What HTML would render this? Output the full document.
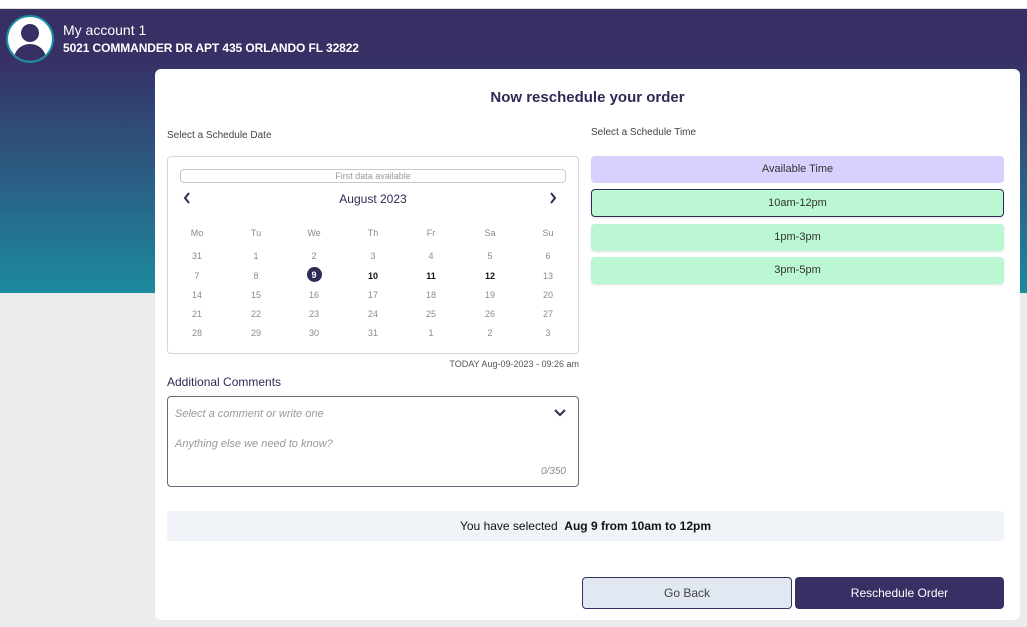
<!DOCTYPE html>
<html><head><style>
*{box-sizing:border-box;margin:0;padding:0}
body{width:1027px;height:627px;position:relative;overflow:hidden;background:#ececec;font-family:"Liberation Sans",sans-serif;}
.a{position:absolute}
.hdr{left:0;top:9px;width:1027px;height:284px;background:linear-gradient(#363065 0px,#363065 50px,#2f4f7a 130px,#1c8a9f 284px)}
.card{left:155px;top:69px;width:865px;height:551px;background:#fff;border-radius:6px}
.cal div{position:absolute;width:30px;text-align:center;font-size:9px;color:#8a8a8a}
.slot{position:absolute;left:591px;width:413px;height:27px;border-radius:4px;background:#bbf7d3;font-size:11px;color:#333;text-align:center;line-height:27px;box-shadow:0 1px 2px rgba(0,0,0,.12)}
</style></head><body>
<div class="a" style="left:0;top:0;width:1027px;height:9px;background:#fff;border-bottom:1px solid #ddd"></div>
<div class="a hdr"></div>
<div class="a" style="left:6px;top:15px;width:48px;height:48px;border-radius:50%;background:#1a8fa0;"></div>
<div class="a" style="left:8px;top:17px;width:44px;height:44px;border-radius:50%;background:#fff;overflow:hidden">
<div class="a" style="left:13px;top:7px;width:18px;height:18px;border-radius:50%;background:#363065"></div>
<div class="a" style="left:6px;top:27px;width:32px;height:30px;border-radius:50% 50% 0 0;background:#363065"></div>
</div>
<div class="a" style="left:63px;top:22px;color:#fff;font-size:14px">My account 1</div>
<div class="a" style="left:63px;top:41px;color:#fff;font-size:12px;font-weight:bold;letter-spacing:-0.1px">5021 COMMANDER DR APT 435 ORLANDO FL 32822</div>
<div class="a card"></div>
<div class="a" style="left:155px;top:89px;width:865px;text-align:center;font-size:15px;font-weight:bold;color:#2e2b55">Now reschedule your order</div>
<div class="a" style="left:167px;top:130px;font-size:10px;color:#444">Select a Schedule Date</div>
<div class="a" style="left:591px;top:127px;font-size:10px;color:#444">Select a Schedule Time</div>
<div class="a" style="left:167px;top:156px;width:412px;height:198px;border:1px solid #d6d6dc;border-radius:4px"></div>
<div class="a" style="left:180px;top:169px;width:386px;height:14px;border:1px solid #c8c8d2;border-radius:4px;font-size:9px;color:#999;text-align:center;line-height:12px">First data available</div>
<svg class="a" style="left:182px;top:191px" width="10" height="14"><path d="M7 2 L3 7 L7 12" stroke="#2e2b55" stroke-width="2" fill="none"/></svg>
<svg class="a" style="left:548px;top:191px" width="10" height="14"><path d="M3 2 L7 7 L3 12" stroke="#2e2b55" stroke-width="2" fill="none"/></svg>
<div class="a" style="left:167px;top:192px;width:412px;text-align:center;font-size:12px;color:#2e2b55">August 2023</div>
<div class="a" style="left:307px;top:267px;width:15px;height:15px;border-radius:50%;background:#2e2b55"></div>
<div class="cal">
<div style="left:182px;top:228px">Mo</div><div style="left:241px;top:228px">Tu</div><div style="left:299px;top:228px">We</div><div style="left:358px;top:228px">Th</div><div style="left:416px;top:228px">Fr</div><div style="left:475px;top:228px">Sa</div><div style="left:533px;top:228px">Su</div>
<div style="left:182px;top:251px">31</div><div style="left:241px;top:251px">1</div><div style="left:299px;top:251px">2</div><div style="left:358px;top:251px">3</div><div style="left:416px;top:251px">4</div><div style="left:475px;top:251px">5</div><div style="left:533px;top:251px">6</div>
<div style="left:182px;top:271px">7</div><div style="left:241px;top:271px">8</div><div style="left:299px;top:270px;color:#fff;font-weight:bold">9</div><div style="left:358px;top:271px;color:#111;font-weight:bold">10</div><div style="left:416px;top:271px;color:#111;font-weight:bold">11</div><div style="left:475px;top:271px;color:#111;font-weight:bold">12</div><div style="left:533px;top:271px">13</div>
<div style="left:182px;top:290px">14</div><div style="left:241px;top:290px">15</div><div style="left:299px;top:290px">16</div><div style="left:358px;top:290px">17</div><div style="left:416px;top:290px">18</div><div style="left:475px;top:290px">19</div><div style="left:533px;top:290px">20</div>
<div style="left:182px;top:309px">21</div><div style="left:241px;top:309px">22</div><div style="left:299px;top:309px">23</div><div style="left:358px;top:309px">24</div><div style="left:416px;top:309px">25</div><div style="left:475px;top:309px">26</div><div style="left:533px;top:309px">27</div>
<div style="left:182px;top:328px">28</div><div style="left:241px;top:328px">29</div><div style="left:299px;top:328px">30</div><div style="left:358px;top:328px">31</div><div style="left:416px;top:328px">1</div><div style="left:475px;top:328px">2</div><div style="left:533px;top:328px">3</div>
</div>
<div class="a" style="left:379px;top:359px;width:200px;text-align:right;font-size:9px;color:#555">TODAY Aug-09-2023 - 09:26 am</div>
<div class="a" style="left:167px;top:375px;font-size:12px;color:#2e2b55">Additional Comments</div>
<div class="a" style="left:167px;top:396px;width:412px;height:91px;border:1px solid #666a7a;border-radius:4px"></div>
<div class="a" style="left:175px;top:408px;font-size:11px;color:#999;font-style:italic">Select a comment or write one</div>
<svg class="a" style="left:553px;top:408px" width="14" height="10"><path d="M2 2 L7 7 L12 2" stroke="#2e2b55" stroke-width="2" fill="none"/></svg>
<div class="a" style="left:175px;top:438px;font-size:11px;color:#999;font-style:italic">Anything else we need to know?</div>
<div class="a" style="left:520px;top:466px;width:46px;text-align:right;font-size:10px;color:#888;font-style:italic">0/350</div>
<div class="slot" style="top:156px;background:#d8d1fd;box-shadow:none">Available Time</div>
<div class="slot" style="top:189px;height:28px;border:1px solid #2e2b55;line-height:26px">10am-12pm</div>
<div class="slot" style="top:224px">1pm-3pm</div>
<div class="slot" style="top:257px">3pm-5pm</div>
<div class="a" style="left:167px;top:511px;width:837px;height:30px;background:#f0f3f8;border-radius:3px;text-align:center;line-height:30px;font-size:12px;color:#111">You have selected&nbsp; <b>Aug 9 from 10am to 12pm</b></div>
<div class="a" style="left:582px;top:577px;width:210px;height:32px;background:#e2e8f2;border:1px solid #363065;border-radius:4px;text-align:center;line-height:30px;font-size:12px;color:#444">Go Back</div>
<div class="a" style="left:795px;top:577px;width:209px;height:32px;background:#363065;border-radius:4px;text-align:center;line-height:32px;font-size:12px;color:#fff">Reschedule Order</div>
</body></html>
